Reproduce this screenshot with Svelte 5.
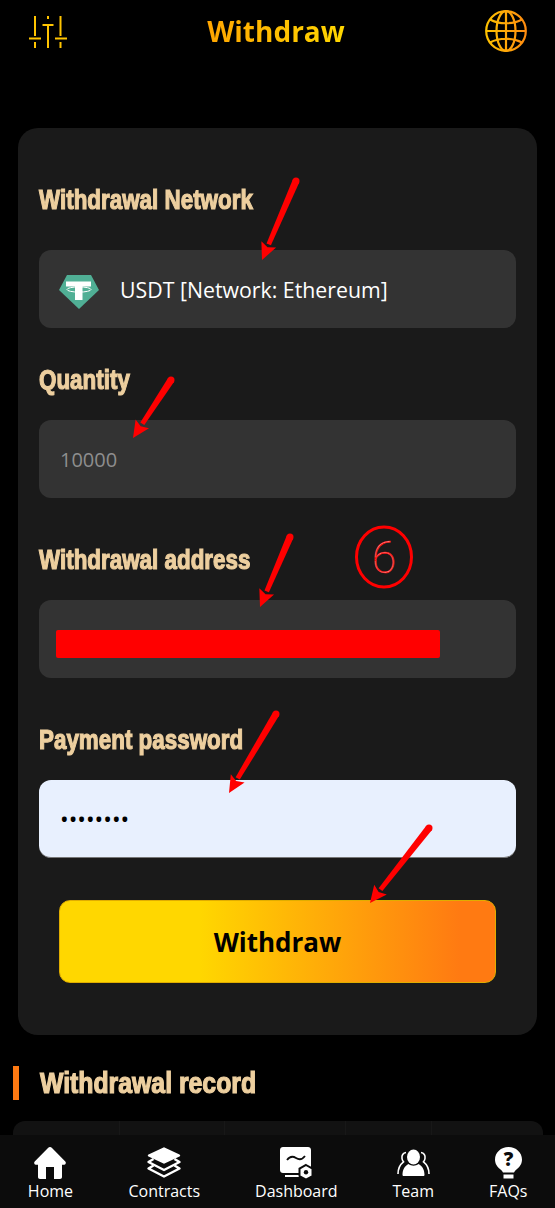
<script>
	const arrows = [
		[296, 181, 262, 260],
		[171, 380, 133, 438],
		[290, 537, 260, 607],
		[276, 714, 229, 793],
		[429, 828, 370, 903]
	].map(([x1, y1, x2, y2]) => {
		const len = Math.hypot(x2 - x1, y2 - y1);
		const dx = (x2 - x1) / len;
		const dy = (y2 - y1) / len;
		const bx = x2 - dx * 17;
		const by = y2 - dy * 17;
		const nx = bx + dx * 3;
		const ny = by + dy * 3;
		return {
			x1,
			y1,
			shaft: `${x1 - dy * 3.500},${y1 + dx * 3.500} ${bx - dy * 2.400},${by + dx * 2.400} ${bx + dy * 2.400},${by - dx * 2.400} ${x1 + dy * 3.500},${y1 - dx * 3.500}`,
			head: `${x2},${y2} ${bx - dy * 8},${by + dx * 8} ${nx},${ny} ${bx + dy * 8},${by - dx * 8}`
		};
	});
</script>

<div class="page">
	<header class="top">
		<svg class="sliders" width="38" height="34" viewBox="0 0 38 34" fill="none" stroke="#ffc400" stroke-width="2">
			<path d="M6 1v20M6 27v6M0 23.500h12M19 1v3M19 10v23M13.500 10h11M31.500 1v20M31.500 27v6M26 23.500h12" />
		</svg>
		<h1>Withdraw</h1>
		<svg class="globe" width="42" height="42" viewBox="0 0 42 42" fill="none" stroke="url(#globeFill)" stroke-width="2.200">
			<defs>
				<linearGradient id="globeFill" gradientUnits="userSpaceOnUse" x1="0" y1="0" x2="42" y2="0">
					<stop offset="0" stop-color="#ffc400" />
					<stop offset="1" stop-color="#ff8a10" />
				</linearGradient>
			</defs>
			<circle cx="21" cy="21" r="19.800" />
			<ellipse cx="21" cy="21" rx="9.500" ry="19.800" />
			<path d="M21 1v40M1.200 21h39.600M5 9.500c9 5 23 5 32 0M5 32.500c9-5 23-5 32 0" />
		</svg>
	</header>

	<main class="card">
		<div class="label first">Withdrawal Network</div>
		<div class="field network">
			<svg class="coin" width="40" height="34" viewBox="0 0 40 34">
				<path d="M8 0h24l8 15-20 19L0 15z" fill="#50af95" />
				<path d="M7 6.500h25v5h-8.500V25h-7.500V11.500H7z" fill="#fff" />
				<ellipse cx="20" cy="14.500" rx="12" ry="2.600" fill="none" stroke="#fff" stroke-width="1" />
			</svg>
			<span>USDT [Network: Ethereum]</span>
		</div>

		<div class="label second">Quantity</div>
		<input class="field input" type="text" placeholder="10000" />

		<div class="label">Withdrawal address</div>
		<div class="field address"><div class="redact"></div></div>

		<div class="label">Payment password</div>
		<input class="field input filled" type="password" value="12345678" />

		<button class="submit" type="button">Withdraw</button>
	</main>

	<section class="record">
		<div class="label heading">Withdrawal record</div>
	</section>
	<div class="table">
		<div class="col" style="width: 106px"></div>
		<div class="col" style="width: 104px"></div>
		<div class="col" style="width: 120px"></div>
		<div class="col" style="width: 85px"></div>
		<div class="col last"></div>
	</div>

	<nav class="bottom">
		<div class="item">
			<svg width="32" height="32" viewBox="0 0 32 32" fill="#fff">
				<path d="M16 0c.8 0 1.400.3 2 .9l13.300 13.600c1.200 1.300.4 3.200-1.300 3.200h-2V30c0 1.200-.8 2-2 2h-6V20h-8v12H6c-1.200 0-2-.8-2-2V17.700H2c-1.700 0-2.500-1.900-1.300-3.200L14 .9c.6-.6 1.200-.9 2-.9z" />
			</svg>
			<span>Home</span>
		</div>
		<div class="item">
			<svg width="34" height="32" viewBox="0 0 34 32" fill="none" stroke="#fff" stroke-width="2.400" stroke-linejoin="round">
				<path d="M17 1.500 32 8.500 17 15.500 2 8.500z" fill="#fff" />
				<path d="M6.500 12 1.500 15 17 23 32.500 15 27.500 12" />
				<path d="M6.500 18.500 1.500 21.500 17 29.500 32.500 21.500 27.500 18.500" />
			</svg>
			<span>Contracts</span>
		</div>
		<div class="item">
			<svg width="33" height="32" viewBox="0 0 33 32">
				<path d="M3 0h25c1.700 0 3 1.300 3 3v20c0 1.700-1.300 3-3 3H3c-1.700 0-3-1.300-3-3V3C0 1.300 1.300 0 3 0z" fill="#fff" />
				<path d="M7 13c3-4 6-4 9-2s6 2 9-2" fill="none" stroke="#0c0c0c" stroke-width="1.800" />
				<path d="M5 29h14" stroke="#fff" stroke-width="2" />
				<path d="M26 18l6.500 3.700v7.300L26 32.700 19.500 29v-7.300z" fill="#fff" stroke="#0c0c0c" stroke-width="2" />
				<circle cx="26" cy="25.300" r="2.200" fill="#0c0c0c" />
			</svg>
			<span>Dashboard</span>
		</div>
		<div class="item">
			<svg width="33" height="32" viewBox="0 0 33 32" fill="#fff">
				<ellipse cx="16.500" cy="10" rx="6.500" ry="7.500" />
				<path d="M5.500 28c0-6 2.500-9 6-11 3 2.200 7 2.200 10 0 3.500 2 6 5 6 11 0 .5-.5 1-1 1h-20c-.5 0-1-.5-1-1z" />
				<path d="M9 5.500c-3 .3-4.500 3-4 6 .2 1.500.8 2.500 1.500 3.300C3 17.500 1 21.500 1 27M24 5.500c3 .3 4.500 3 4 6-.2 1.500-.8 2.500-1.500 3.300 3.500 2.700 5.500 6.700 5.500 12.200" fill="none" stroke="#fff" stroke-width="1.600" />
			</svg>
			<span>Team</span>
		</div>
		<div class="item">
			<svg width="27" height="32" viewBox="0 0 27 32">
				<path d="M13.500 0C21 0 27 5.500 27 12.500c0 4.500-2.300 7.300-5 9.500-1.500 1.200-2.500 2.300-3 3.500H8c-.5-1.200-1.500-2.300-3-3.500-2.700-2.200-5-5-5-9.500C0 5.500 6 0 13.500 0z" fill="#fff" />
				<path d="M8.500 29.500h10" stroke="#fff" stroke-width="4" />
				<text x="13.500" y="18.500" class="mark">?</text>
			</svg>
			<span>FAQs</span>
		</div>
	</nav>

	<svg class="notes" width="555" height="1208" viewBox="0 0 555 1208">
		{#each arrows as a}
			<circle cx={a.x1} cy={a.y1} r="3.500" fill="#f00" />
			<polygon points={a.shaft} fill="#f00" />
			<polygon points={a.head} fill="#f00" />
		{/each}
		<ellipse cx="384" cy="557" rx="27.500" ry="30" fill="none" stroke="#f00" stroke-width="3" />
		<text x="384" y="573" class="six">6</text>
	</svg>
</div>

<style>
	:global(body) {
		background: #000;
	}

	.page {
		position: relative;
		height: 1208px;
		overflow: hidden;
		background: #000;
		font-family: 'Open Sans', 'Noto Sans', sans-serif;
		color: #fff;
	}

	.top {
		height: 128px;
		box-sizing: border-box;
		padding: 15px 28px 0 29px;
		display: flex;
		align-items: flex-start;
		justify-content: space-between;
	}

	.top h1 {
		margin: 0;
		font-size: 28px;
		line-height: 32px;
		font-weight: 700;
		background: linear-gradient(90deg, #ffa500, #ffd700);
		-webkit-background-clip: text;
		background-clip: text;
		color: transparent;
	}

	.globe {
		margin-top: -5px;
	}

	.card {
		margin: 0 18px;
		padding: 52px 21px;
		background: #1a1a1a;
		border-radius: 20px;
		display: flex;
		flex-direction: column;
	}

	/* Impact isn't installed: a squeezed, thickened bold stands in for it */
	.label {
		height: 40px;
		line-height: 40px;
		margin: 42px 0 20px;
		font-family: 'Liberation Sans', sans-serif;
		font-size: 28px;
		font-weight: 700;
		color: #edcf9f;
		-webkit-text-stroke: 1.2px #edcf9f;
		white-space: nowrap;
		transform: scaleX(0.8);
		transform-origin: left center;
	}

	.label.first {
		margin: 0 0 30px;
	}

	.label.second {
		margin-top: 32px;
	}

	.field {
		box-sizing: border-box;
		width: 100%;
		height: 78px;
		flex: none;
		background: #333;
		border: 0;
		border-radius: 12px;
	}

	.network {
		display: flex;
		align-items: center;
		gap: 21px;
		padding-left: 20px;
		font-size: 21.300px;
		color: #fff;
	}

	.coin {
		margin-top: 6px;
	}

	.input {
		padding: 0 21px;
		font-family: inherit;
		font-size: 20px;
		color: #000;
		outline: none;
	}

	.input::placeholder {
		color: #8e8e8e;
		opacity: 1;
	}

	.filled {
		background: #e8f0fe;
		font-size: 23px;
		border-bottom: 1px solid #777;
	}

	.address {
		padding: 30px 76px 20px 17px;
	}

	.redact {
		height: 28px;
		background: #f00;
		border-radius: 2px;
	}

	.submit {
		margin: 42px 20px 0;
		height: 83px;
		flex: none;
		border: 1px solid #e0ad00;
		border-radius: 11px;
		background: linear-gradient(90deg, #ffd700 32%, #ff7a12 92%);
		font-family: inherit;
		font-size: 26px;
		font-weight: 700;
		color: #000;
	}

	.record {
		margin: 31px 0 0 13px;
		height: 34px;
		padding-left: 27px;
		position: relative;
		display: flex;
		align-items: center;
	}

	.record::before {
		content: '';
		position: absolute;
		left: 0;
		top: 0;
		width: 6px;
		height: 34px;
		background: #ff7a12;
	}

	.label.heading {
		margin: 0;
		font-size: 29px;
		transform: scaleX(0.855);
	}

	.table {
		margin: 21px 12px 0 13px;
		height: 60px;
		background: #121212;
		border-radius: 12px;
		display: flex;
	}

	.col {
		border-right: 1px solid #181818;
	}

	.col.last {
		flex: 1;
		border: 0;
	}

	.bottom {
		position: absolute;
		left: 0;
		right: 0;
		bottom: 0;
		height: 73px;
		box-sizing: border-box;
		padding-top: 12px;
		background: #0c0c0c;
		display: flex;
		justify-content: space-around;
	}

	.item {
		display: flex;
		flex-direction: column;
		align-items: center;
		font-size: 16px;
		line-height: 24px;
	}

	.item:first-child {
		min-width: 46px;
	}

	.item svg {
		display: block;
		overflow: visible;
	}

	.mark {
		font-family: 'Open Sans', sans-serif;
		font-size: 19px;
		font-weight: 800;
		text-anchor: middle;
		fill: #0c0c0c;
	}

	.notes {
		position: absolute;
		left: 0;
		top: 0;
		pointer-events: none;
	}

	.six {
		font-family: Roboto, sans-serif;
		font-size: 44px;
		font-weight: 100;
		text-anchor: middle;
		fill: #ffb0b0;
		stroke: #f00;
		stroke-width: 0.6;
	}
</style>
